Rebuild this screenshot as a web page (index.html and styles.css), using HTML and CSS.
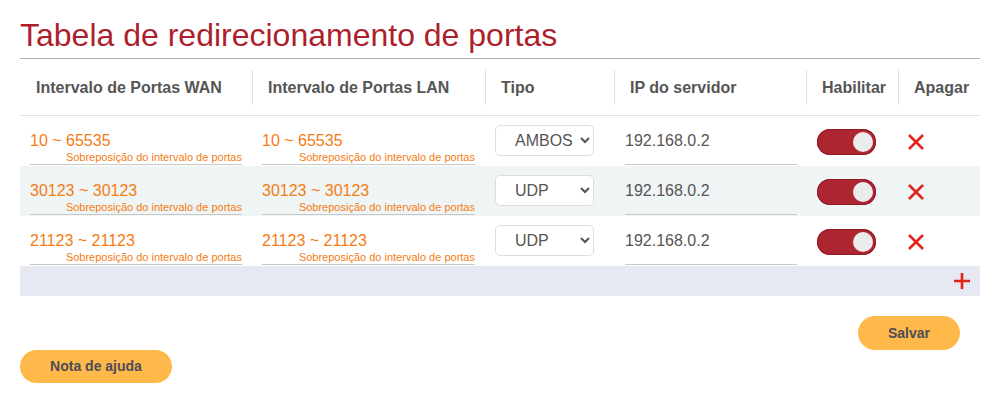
FILE: index.html
```html
<!DOCTYPE html>
<html lang="pt">
<head>
    <meta charset="UTF-8">
    <meta name="viewport" content="width=device-width, initial-scale=1.0">
    <title>Redirecionamento de portas</title>
    <link rel="stylesheet" href="styles.css">
</head>
<body>
    <div class="page">
        <h1>Tabela de redirecionamento de portas</h1>

        <table class="ports">
            <colgroup>
                <col class="c-wan"><col class="c-lan"><col class="c-type">
                <col class="c-ip"><col class="c-on"><col class="c-del">
            </colgroup>
            <thead>
                <tr>
                    <th><div class="first">Intervalo de Portas WAN</div></th>
                    <th><div>Intervalo de Portas LAN</div></th>
                    <th><div>Tipo</div></th>
                    <th><div>IP do servidor</div></th>
                    <th><div>Habilitar</div></th>
                    <th><div>Apagar</div></th>
                </tr>
            </thead>
            <tbody>
                <tr>
                    <td><div class="range"><span class="val">10 ~ 65535</span><span class="hint">Sobreposição do intervalo de portas</span></div></td>
                    <td><div class="range"><span class="val">10 ~ 65535</span><span class="hint">Sobreposição do intervalo de portas</span></div></td>
                    <td class="sel"><select><option>AMBOS</option><option>TCP</option><option>UDP</option></select></td>
                    <td class="addr"><div class="ip">192.168.0.2</div></td>
                    <td class="sw"><span class="toggle"><span class="knob"></span></span></td>
                    <td class="del"><svg width="18" height="16" viewBox="0 0 18 16"><path d="M2 1 L16 15 M16 1 L2 15" stroke="#e2231a" stroke-width="2.6"/></svg></td>
                </tr>
                <tr class="alt">
                    <td><div class="range"><span class="val">30123 ~ 30123</span><span class="hint">Sobreposição do intervalo de portas</span></div></td>
                    <td><div class="range"><span class="val">30123 ~ 30123</span><span class="hint">Sobreposição do intervalo de portas</span></div></td>
                    <td class="sel"><select><option>UDP</option><option>TCP</option><option>AMBOS</option></select></td>
                    <td class="addr"><div class="ip">192.168.0.2</div></td>
                    <td class="sw"><span class="toggle"><span class="knob"></span></span></td>
                    <td class="del"><svg width="18" height="16" viewBox="0 0 18 16"><path d="M2 1 L16 15 M16 1 L2 15" stroke="#e2231a" stroke-width="2.6"/></svg></td>
                </tr>
                <tr>
                    <td><div class="range"><span class="val">21123 ~ 21123</span><span class="hint">Sobreposição do intervalo de portas</span></div></td>
                    <td><div class="range"><span class="val">21123 ~ 21123</span><span class="hint">Sobreposição do intervalo de portas</span></div></td>
                    <td class="sel"><select><option>UDP</option><option>TCP</option><option>AMBOS</option></select></td>
                    <td class="addr"><div class="ip">192.168.0.2</div></td>
                    <td class="sw"><span class="toggle"><span class="knob"></span></span></td>
                    <td class="del"><svg width="18" height="16" viewBox="0 0 18 16"><path d="M2 1 L16 15 M16 1 L2 15" stroke="#e2231a" stroke-width="2.6"/></svg></td>
                </tr>
                <tr class="add">
                    <td colspan="6"><svg width="18" height="18" viewBox="0 0 18 18"><path d="M9 1 V17 M1 9 H17" stroke="#e2231a" stroke-width="2.6"/></svg></td>
                </tr>
            </tbody>
        </table>

        <div class="actions">
            <button class="btn save">Salvar</button>
        </div>
        <button class="btn help">Nota de ajuda</button>
    </div>
</body>
</html>
```

FILE: styles.css
```css
body {
    margin: 0;
    font-family: "Liberation Sans", Arial, sans-serif;
    color: #555;
    background: #fff;
}
.page {
    padding: 0 14px 0 20px;
}
h1 {
    margin: 0;
    padding: 17px 0 4px;
    font-size: 32px;
    font-weight: normal;
    color: #ad1f2c;
    border-bottom: 1px solid #b3b3b3;
}
.ports {
    width: 960px;
    border-collapse: collapse;
    table-layout: fixed;
}
.c-wan { width: 232px; }
.c-lan { width: 233px; }
.c-type { width: 129px; }
.c-ip { width: 192px; }
.c-on { width: 92px; }
.c-del { width: 82px; }

th {
    padding: 11px 0 10px;
    text-align: left;
    font-size: 16px;
    font-weight: bold;
    color: #555;
    border-bottom: 1px solid #e2e2e2;
}
th div {
    line-height: 35px;
    padding-left: 15px;
    border-left: 1px solid #e0e0e0;
    white-space: nowrap;
}
th div.first {
    border-left-color: transparent;
}
tbody tr {
    height: 50px;
}
td {
    padding: 15px 10px 0;
    vertical-align: top;
}
tr.alt td { background: #eff4f4; }

.range, .ip {
    border-bottom: 1px solid #c8c8c8;
}
.range .val {
    display: block;
    line-height: 20px;
    font-size: 16px;
    color: #f57c12;
}
.range .hint {
    display: block;
    text-align: right;
    font-size: 11px;
    line-height: 13px;
    color: #f57c12;
}
td.addr {
    padding: 15px 9px 0 11px;
}
.ip {
    line-height: 20px;
    padding-bottom: 13px;
    font-size: 16px;
    color: #555;
}
td.sel {
    padding-top: 9px;
}
select {
    display: block;
    width: 99px;
    height: 31px;
    padding: 0 0 0 15px;
    border: 1px solid #ddd;
    border-radius: 5px;
    background: #fff;
    font-family: "Liberation Sans", Arial, sans-serif;
    font-size: 16px;
    color: #555;
}
td.sw {
    padding: 13px 0 0 11px;
}
.toggle {
    display: flex;
    justify-content: flex-end;
    align-items: center;
    width: 59px;
    height: 26px;
    padding-right: 3px;
    box-sizing: border-box;
    border-radius: 13px;
    background: #ad2530;
    box-shadow: inset 0 0 0 1px #8e1c26;
}
.knob {
    width: 20px;
    height: 20px;
    border-radius: 50%;
    background: #ececec;
}
td.del {
    padding: 18px 0 0 9px;
}
td.del svg, tr.add svg { display: block; }

tbody tr.add {
    height: 30px;
}
tr.add td {
    background: #e6e9f1;
    padding: 0 9px 0 0;
    vertical-align: middle;
}
tr.add svg {
    margin-left: auto;
}

.actions {
    display: flex;
    justify-content: flex-end;
    padding: 20px 20px 0 0;
}
.btn {
    border: none;
    background: #ffb94a;
    color: #4d4d57;
    font-family: "Liberation Sans", Arial, sans-serif;
    font-weight: bold;
    font-size: 14px;
    cursor: pointer;
}
.save {
    width: 102px;
    height: 34px;
    border-radius: 17px;
}
.help {
    display: block;
    width: 152px;
    height: 33px;
    border-radius: 17px;
}
```
